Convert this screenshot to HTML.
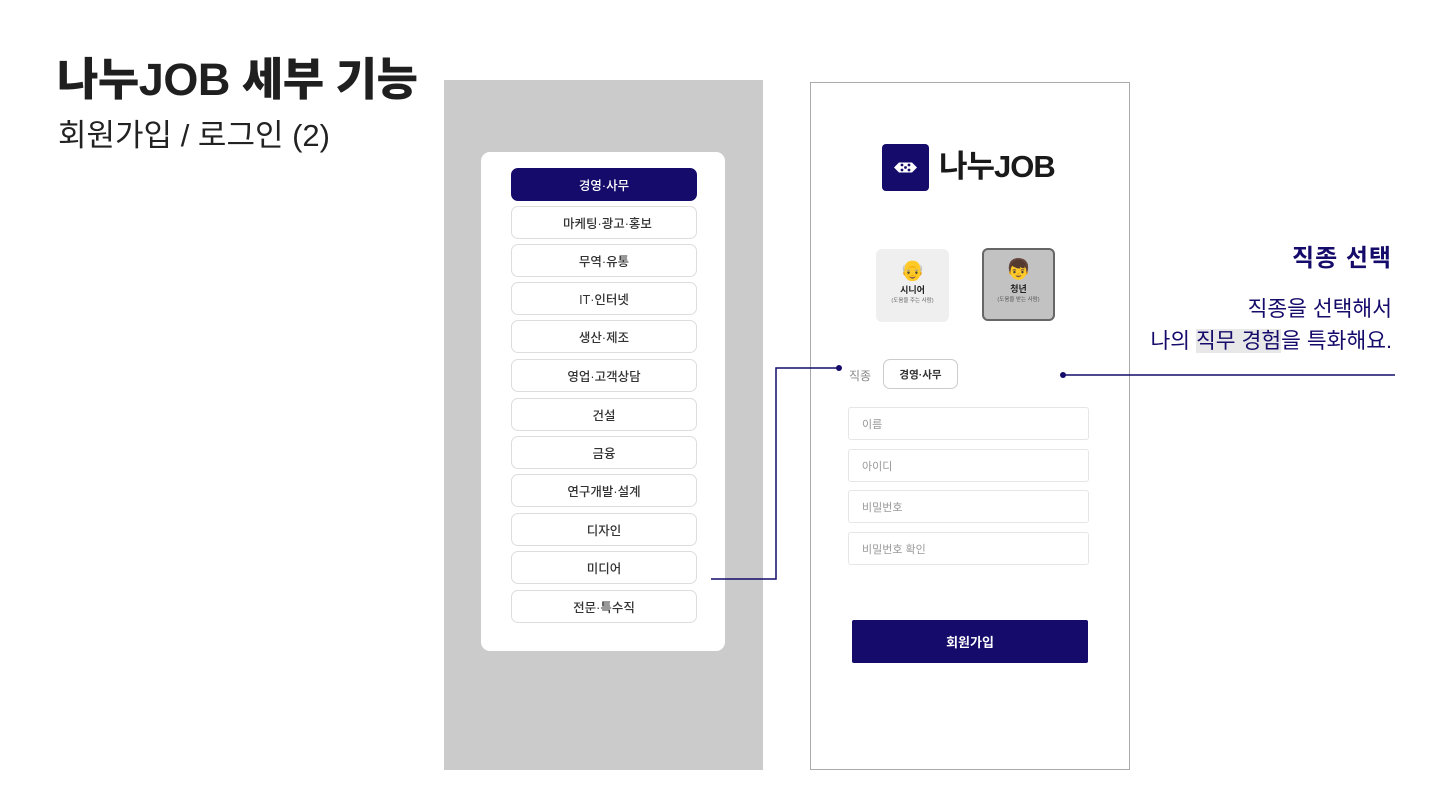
<!DOCTYPE html>
<html><head><meta charset="utf-8"><style>
*{margin:0;padding:0;box-sizing:border-box}
body{width:1440px;height:809px;background:#fff;position:relative;overflow:hidden;font-family:"Liberation Sans","Noto Sans CJK KR",sans-serif;color:#222}
.abs{position:absolute}
h1{position:absolute;left:57px;top:52px;font-size:45px;font-weight:900;letter-spacing:-0.5px;color:#1f1f1f;line-height:56px}
.sub{left:58px;top:116px;font-size:31px;color:#222;line-height:40px}
.gray{left:444px;top:80px;width:319px;height:690px;background:#cbcbcb}
.card{left:481px;top:152px;width:244px;height:499px;background:#fff;border-radius:9px}
.item{position:absolute;left:511px;width:186px;height:33px;border:1px solid #ddd;border-radius:7px;background:#fff;font-size:12.5px;font-weight:500;color:#333;display:flex;align-items:center;justify-content:center}
.item.sel{background:#140b6a;color:#fff;border-color:#140b6a}
.phone{left:810px;top:82px;width:320px;height:688px;border:1px solid #aaa;background:#fff}
.logo{left:882px;top:144px;width:47px;height:47px;background:#140b6a;border-radius:4px}
.logot{left:939px;top:147px;font-size:31px;font-weight:700;color:#1a1a1a;line-height:40px;letter-spacing:-1px}
.ucard{width:73px;height:73px;border-radius:6px;text-align:center;font-size:9px}
.inp{position:absolute;left:848px;width:241px;height:33px;border:1px solid #e6e6e6;border-radius:3px;font-size:11px;color:#999;padding-left:13px;display:flex;align-items:center}
.btn{left:852px;top:620px;width:236px;height:43px;background:#140b6a;color:#fff;border-radius:2px;font-size:13px;font-weight:700;display:flex;align-items:center;justify-content:center}
.rt{right:48px;text-align:right;color:#140b6a}
</style></head><body>
<h1>나누JOB 세부 기능</h1>
<div class="abs sub">회원가입 / 로그인 (2)</div>
<div class="abs gray"></div>
<div class="abs card"></div>
<div class="item sel" style="top:168px">경영·사무</div>
<div class="item" style="top:206px">&nbsp;&nbsp;마케팅·광고·홍보</div>
<div class="item" style="top:244px">무역·유통</div>
<div class="item" style="top:282px">IT·인터넷</div>
<div class="item" style="top:320px">생산·제조</div>
<div class="item" style="top:359px">영업·고객상담</div>
<div class="item" style="top:398px">건설</div>
<div class="item" style="top:436px">금융</div>
<div class="item" style="top:474px">연구개발·설계</div>
<div class="item" style="top:513px">디자인</div>
<div class="item" style="top:551px">미디어</div>
<div class="item" style="top:590px">전문·특수직</div>
<div class="abs phone"></div>
<div class="abs logo"><svg width="47" height="47" viewBox="0 0 47 47"><g fill="#fff"><path d="M12 23.5l5-5h13l5 5-5 5H17z"/></g><g fill="#140b6a"><circle cx="20" cy="21" r="1.4"/><circle cx="27" cy="21" r="1.4"/><circle cx="20" cy="26" r="1.4"/><circle cx="27" cy="26" r="1.4"/><circle cx="23.5" cy="23.5" r="1.4"/></g></svg></div>
<div class="abs logot">나누JOB</div>
<div class="abs ucard" style="left:876px;top:249px;background:#efefef"><div style="font-size:20px;margin-top:10px;line-height:24px">👴</div><div style="font-weight:700;font-size:9px;color:#222">시니어</div><div style="font-size:5.5px;color:#666">(도움을 주는 사람)</div></div>
<div class="abs ucard" style="left:982px;top:248px;background:#c2c2c2;border:2px solid #666"><div style="font-size:20px;margin-top:8px;line-height:24px">👦</div><div style="font-weight:700;font-size:9px;color:#222">청년</div><div style="font-size:5.5px;color:#555">(도움을 받는 사람)</div></div>
<div class="abs" style="left:849px;top:367px;font-size:12px;color:#888">직종</div>
<div class="abs" style="left:883px;top:359px;width:75px;height:30px;border:1.5px solid #ccc;border-radius:7px;font-size:10.5px;font-weight:700;display:flex;align-items:center;justify-content:center;color:#333">경영·사무</div>
<div class="inp" style="top:407px">이름</div>
<div class="inp" style="top:449px">아이디</div>
<div class="inp" style="top:490px">비밀번호</div>
<div class="inp" style="top:532px">비밀번호 확인</div>
<div class="abs btn">회원가입</div>
<svg class="abs" style="left:0;top:0" width="1440" height="809"><g stroke="#140b6a" stroke-width="1.5" fill="none"><polyline points="711,579 776,579 776,368 839,368"/><line x1="1063" y1="375" x2="1395" y2="375"/></g><circle cx="839" cy="368" r="3" fill="#140b6a"/><circle cx="1063" cy="375" r="3" fill="#140b6a"/></svg>
<div class="abs rt" style="top:242px;font-size:24px;font-weight:700;line-height:34px;letter-spacing:1px">직종 선택</div>
<div class="abs rt" style="top:293px;font-size:21.5px;line-height:32px">직종을 선택해서<br>나의 <span style="background:#e8e8e8">직무 경험</span>을 특화해요.</div>
</body></html>
